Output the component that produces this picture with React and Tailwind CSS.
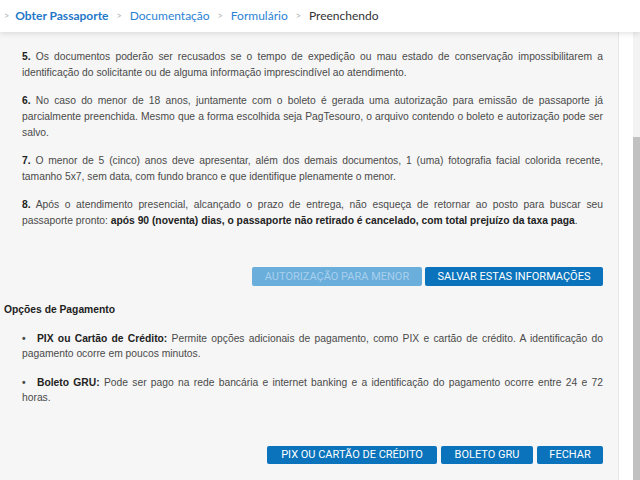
export default function App() {
  const p = "text-justify mb-[12px]";
  return (
    <div className="w-[640px] h-[480px] overflow-hidden bg-white flex flex-col" style={{ fontFamily: '"Liberation Sans", Arial, sans-serif' }}>
      <div className="h-[32px] shrink-0 bg-white relative z-10 shadow-[0_2px_5px_rgba(0,0,0,0.10)] flex items-center pl-[4px] text-[12px]" style={{ fontFamily: 'Lato, "Open Sans", sans-serif' }}>
        <span className="text-[#b0b0b0] text-[9px] mr-[6px]">&gt;</span>
        <span className="text-[#1f78c8] font-bold">Obter Passaporte</span>
        <span className="text-[#b0b0b0] text-[9px] mx-[8px]">&gt;</span>
        <span className="text-[#2b82d4]">Documentação</span>
        <span className="text-[#b0b0b0] text-[9px] mx-[8px]">&gt;</span>
        <span className="text-[#2b82d4]">Formulário</span>
        <span className="text-[#b0b0b0] text-[9px] mx-[8px]">&gt;</span>
        <span className="text-[#333333]">Preenchendo</span>
      </div>
      <div className="flex flex-1 min-h-0">
        <div className="w-[619px] shrink-0 bg-[#f6f6f6] border-r border-[#e6e6e6] pl-[4px] pt-[17px] text-[10.3px] leading-[16px] text-[#4a4a4a]">
          <div className="pl-[18px] pr-[15px]">
            <p className={p}><b className="text-[#222]">5.</b> Os documentos poderão ser recusados se o tempo de expedição ou mau estado de conservação impossibilitarem a identificação do solicitante ou de alguma informação imprescindível ao atendimento.</p>
            <p className={p}><b className="text-[#222]">6.</b> No caso do menor de 18 anos, juntamente com o boleto é gerada uma autorização para emissão de passaporte já parcialmente preenchida. Mesmo que a forma escolhida seja PagTesouro, o arquivo contendo o boleto e autorização pode ser salvo.</p>
            <p className={p}><b className="text-[#222]">7.</b> O menor de 5 (cinco) anos deve apresentar, além dos demais documentos, 1 (uma) fotografia facial colorida recente, tamanho 5x7, sem data, com fundo branco e que identifique plenamente o menor.</p>
            <p className="text-justify"><b className="text-[#222]">8.</b> Após o atendimento presencial, alcançado o prazo de entrega, não esqueça de retornar ao posto para buscar seu passaporte pronto: <b className="text-[#222]">após 90 (noventa) dias, o passaporte não retirado é cancelado, com total prejuízo da taxa paga</b>.</p>
            <div className="flex justify-end gap-[3px] mt-[38px]" style={{ fontFamily: 'Roboto, sans-serif' }}>
              <button className="h-[19px] w-[170px] rounded-[2px] bg-[#6aaedc] text-[#a8d0ec] text-[11px] leading-[19px]">AUTORIZAÇÃO PARA MENOR</button>
              <button className="h-[19px] w-[178px] rounded-[2px] bg-[#0a73bb] text-white text-[11px] leading-[19px]">SALVAR ESTAS INFORMAÇÕES</button>
            </div>
          </div>
          <div className="mt-[16px] font-bold text-[#222]">Opções de Pagamento</div>
          <div className="pl-[18px] pr-[15px] mt-[13px] leading-[15px]">
            <p className="text-justify mb-[14px]"><span className="inline-block w-[15px] font-bold">•</span><b className="text-[#222]">PIX ou Cartão de Crédito:</b> Permite opções adicionais de pagamento, como PIX e cartão de crédito. A identificação do pagamento ocorre em poucos minutos.</p>
            <p className="text-justify"><span className="inline-block w-[15px] font-bold">•</span><b className="text-[#222]">Boleto GRU:</b> Pode ser pago na rede bancária e internet banking e a identificação do pagamento ocorre entre 24 e 72 horas.</p>
            <div className="flex justify-end gap-[4px] mt-[41px]" style={{ fontFamily: 'Roboto, sans-serif' }}>
              <button className="h-[18px] w-[170px] rounded-[2px] bg-[#0a73bb] text-white text-[11px] leading-[18px]">PIX OU CARTÃO DE CRÉDITO</button>
              <button className="h-[18px] w-[92px] rounded-[2px] bg-[#0a73bb] text-white text-[11px] leading-[18px]">BOLETO GRU</button>
              <button className="h-[18px] w-[66px] rounded-[2px] bg-[#0a73bb] text-white text-[11px] leading-[18px]">FECHAR</button>
            </div>
          </div>
        </div>
        <div className="w-[14px] shrink-0 bg-white"></div>
        <div className="w-[7px] shrink-0 bg-[#f3f3f3] flex flex-col">
          <div className="h-[105px] shrink-0"></div>
          <div className="flex-1 bg-[#c1c1c1]"></div>
        </div>
      </div>
    </div>
  );
}
